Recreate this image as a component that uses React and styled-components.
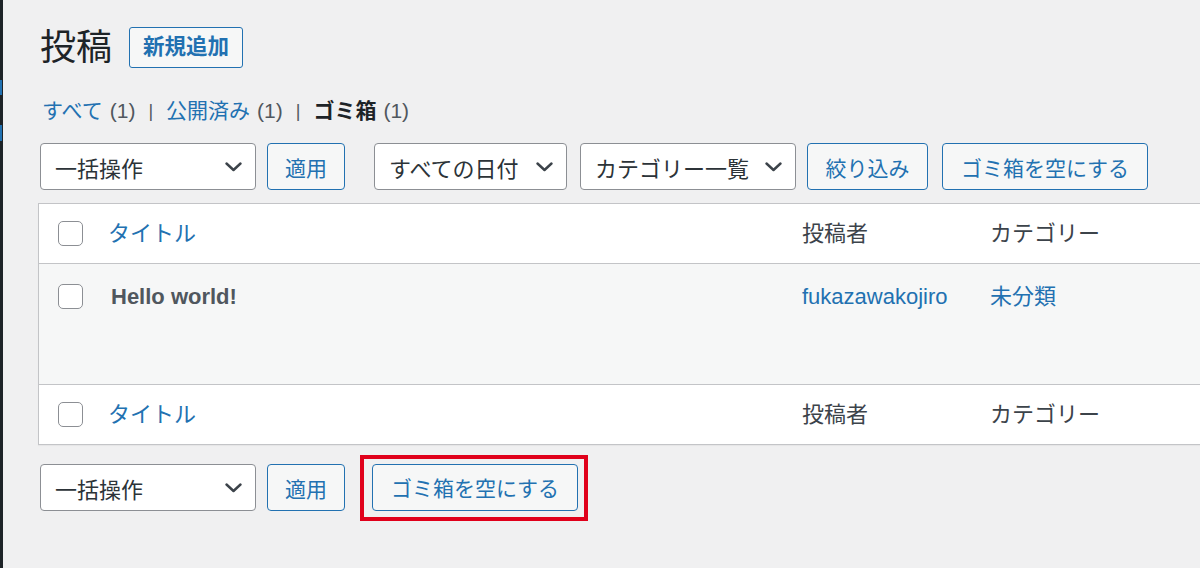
import styled, { createGlobalStyle } from "styled-components";

const GlobalStyle = createGlobalStyle`
  html, body {
    margin: 0;
    padding: 0;
    background: #f0f0f1;
    overflow: hidden;
  }
  body {
    font-family: "Liberation Sans", "Noto Sans CJK JP", sans-serif;
    color: #3c434a;
  }
`;

const blue = "#2271b1";

const Page = styled.div`
  display: flex;
  width: 1200px;
  height: 568px;
  overflow: hidden;
`;

const SideEdge = styled.div`
  flex: 0 0 3px;
  background: #1d2327;
  display: flex;
  flex-direction: column;
`;

const SideMark = styled.div`
  width: 2px;
  height: ${(p) => p.$h}px;
  margin-top: ${(p) => p.$top}px;
  background: #2271b1;
`;

const Main = styled.div`
  flex: 1;
  padding: 27px 0 0 35px;
  min-width: 0;
`;

const TitleRow = styled.div`
  display: flex;
  align-items: center;
  gap: 17px;
  height: 41px;
  margin-left: 2px;
`;

const Heading = styled.h1`
  margin: 0;
  font-size: 36px;
  font-weight: 400;
  line-height: 41px;
  color: #1d2327;
`;

const AddButton = styled.button`
  height: 41px;
  padding: 0 13px;
  border: 1.5px solid ${blue};
  border-radius: 3px;
  background: #f6f7f7;
  color: ${blue};
  font-family: inherit;
  font-size: 21.5px;
  font-weight: 700;
  line-height: 1;
`;

const StatusList = styled.ul`
  display: flex;
  align-items: center;
  list-style: none;
  margin: 29px 0 0 4px;
  padding: 0;
  height: 28px;
  font-size: 21px;
  line-height: 28px;
  color: #50575e;
`;

const StatusItem = styled.li`
  display: flex;
  gap: 7px;
`;

const StatusLink = styled.span`
  color: ${(p) => (p.$current ? "#1d2327" : blue)};
  font-weight: ${(p) => (p.$current ? 700 : 400)};
`;

const Sep = styled.span`
  margin: 0 13px;
  color: #50575e;
  font-size: 18px;
`;

const ToolRow = styled.div`
  display: flex;
  align-items: center;
  height: 47px;
  margin: ${(p) => p.$top}px 0 0 2px;
`;

const Select = styled.div`
  display: flex;
  align-items: center;
  justify-content: space-between;
  box-sizing: border-box;
  width: ${(p) => p.$w}px;
  height: 47px;
  margin-right: ${(p) => p.$mr}px;
  padding: 0 13px 0 14px;
  border: 1px solid #8c8f94;
  border-radius: 4px;
  background: #fff;
  color: #2c3338;
  font-size: 22px;
  white-space: nowrap;
`;

const Chevron = () => (
  <svg width="17" height="10" viewBox="0 0 17 10" fill="none">
    <path d="M1.5 1.5 L8.5 8 L15.5 1.5" stroke="#3c434a" strokeWidth="2.4" strokeLinecap="round" strokeLinejoin="round" />
  </svg>
);

const Button = styled.button`
  box-sizing: border-box;
  width: ${(p) => p.$w}px;
  height: 47px;
  margin-right: ${(p) => p.$mr || 0}px;
  padding: 0;
  border: 1.5px solid ${blue};
  border-radius: 4px;
  background: #f6f7f7;
  color: ${blue};
  font-family: inherit;
  font-size: 21px;
  white-space: nowrap;
`;

const Highlight = styled.div`
  display: flex;
  padding: 5px 6px 6px 8px;
  border: 4px solid #e0001b;
`;

const Table = styled.div`
  margin-top: 13px;
  width: 1200px;
  border: 1px solid #c3c4c7;
  background: #fff;
  box-shadow: 0 1px 1px rgba(0, 0, 0, 0.04);
`;

const Row = styled.div`
  display: grid;
  grid-template-columns: 69px 694px 188px 1fr;
  height: ${(p) => p.$h}px;
  align-items: ${(p) => (p.$top ? "start" : "center")};
  padding-top: ${(p) => (p.$top ? 20 : 0)}px;
  box-sizing: border-box;
  background: ${(p) => (p.$alt ? "#f6f7f7" : "#fff")};
  border-top: ${(p) => (p.$line ? "1px solid #c3c4c7" : "none")};
  font-size: 22px;
  line-height: 26px;
`;

const CheckCell = styled.div`
  display: flex;
  padding-left: 19px;
`;

const Checkbox = styled.span`
  display: block;
  width: 25px;
  height: 25px;
  box-sizing: border-box;
  border: 1.5px solid #8c8f94;
  border-radius: 5px;
  background: #fff;
`;

const Cell = styled.div`
  color: ${(p) => (p.$link ? blue : "#3c434a")};
  white-space: nowrap;
`;

const RowTitle = styled.strong`
  display: block;
  margin-left: 3px;
  color: #50575e;
  font-weight: 700;
`;

export default function App() {
  return (
    <>
      <GlobalStyle />
      <Page>
        <SideEdge>
          <SideMark $top={80} $h={15} />
          <SideMark $top={30} $h={16} />
        </SideEdge>
        <Main>
          <TitleRow>
            <Heading>投稿</Heading>
            <AddButton>新規追加</AddButton>
          </TitleRow>

          <StatusList>
            <StatusItem>
              <StatusLink>すべて</StatusLink>(1)
            </StatusItem>
            <Sep>|</Sep>
            <StatusItem>
              <StatusLink>公開済み</StatusLink>(1)
            </StatusItem>
            <Sep>|</Sep>
            <StatusItem>
              <StatusLink $current>ゴミ箱</StatusLink>(1)
            </StatusItem>
          </StatusList>

          <ToolRow $top={18}>
            <Select $w={216} $mr={11}>
              一括操作 <Chevron />
            </Select>
            <Button $w={78} $mr={29}>適用</Button>
            <Select $w={193} $mr={13}>
              すべての日付 <Chevron />
            </Select>
            <Select $w={216} $mr={11}>
              カテゴリー一覧 <Chevron />
            </Select>
            <Button $w={121} $mr={14}>絞り込み</Button>
            <Button $w={206}>ゴミ箱を空にする</Button>
          </ToolRow>

          <Table>
            <Row $h={59}>
              <CheckCell><Checkbox /></CheckCell>
              <Cell $link>タイトル</Cell>
              <Cell>投稿者</Cell>
              <Cell>カテゴリー</Cell>
            </Row>
            <Row $h={121} $alt $line $top>
              <CheckCell><Checkbox /></CheckCell>
              <Cell><RowTitle>Hello world!</RowTitle></Cell>
              <Cell $link>fukazawakojiro</Cell>
              <Cell $link>未分類</Cell>
            </Row>
            <Row $h={60} $line>
              <CheckCell><Checkbox /></CheckCell>
              <Cell $link>タイトル</Cell>
              <Cell>投稿者</Cell>
              <Cell>カテゴリー</Cell>
            </Row>
          </Table>

          <ToolRow $top={19}>
            <Select $w={216} $mr={11}>
              一括操作 <Chevron />
            </Select>
            <Button $w={78} $mr={15}>適用</Button>
            <Highlight>
              <Button $w={206}>ゴミ箱を空にする</Button>
            </Highlight>
          </ToolRow>
        </Main>
      </Page>
    </>
  );
}
